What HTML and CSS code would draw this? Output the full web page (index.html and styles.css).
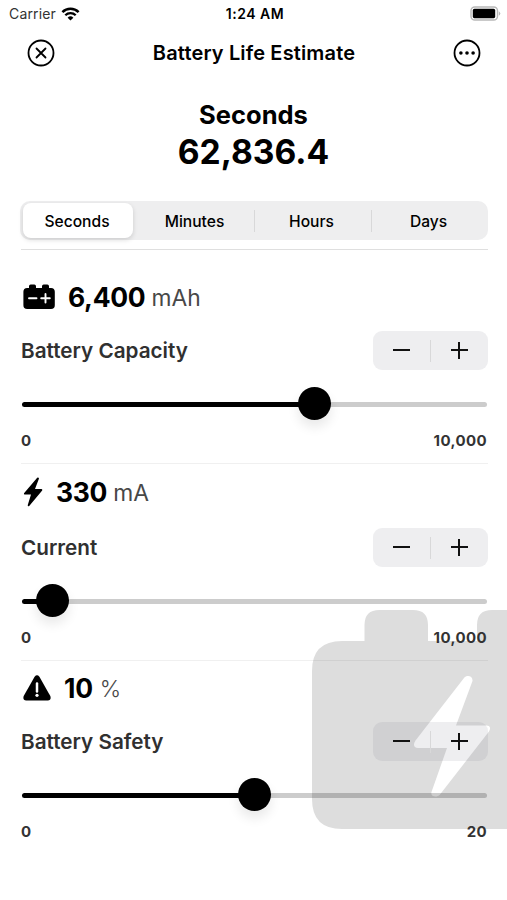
FILE: index.html
```html
<!DOCTYPE html>
<html lang="en">
<head>
  <meta charset="UTF-8">
  <meta name="viewport" content="width=device-width, initial-scale=1.0">
  <title>Battery Life Estimate</title>
  <link rel="stylesheet" href="styles.css">
</head>
<body>
  <div class="status-bar">
    <div class="carrier">
      <span>Carrier</span>
      <svg class="wifi" viewBox="0 0 18 14" width="19" height="14">
        <path d="M.9 5.100a11.500 11.500 0 0 1 16.200 0" fill="none" stroke="#000" stroke-width="2.500"/>
        <path d="M3.800 8.300a7.400 7.400 0 0 1 10.400 0" fill="none" stroke="#000" stroke-width="2.300"/>
        <path d="M9 13.600 6.100 10.700a4.100 4.100 0 0 1 5.800 0z"/>
      </svg>
    </div>
    <span class="time">1:24 AM</span>
    <svg class="battery" viewBox="0 0 31 15" width="31" height="15">
      <rect x="1" y="1" width="26.5" height="13" rx="3.8" fill="#fff" stroke="#b8b8b8" stroke-width="1.4"/>
      <rect x="2.8" y="2.8" width="22.4" height="9.4" rx="1.6"/>
      <path d="M28.8 5.200q3 2.300 0 4.600z" fill="#b8b8b8"/>
    </svg>
  </div>

  <div class="nav-bar">
    <button class="icon-button" aria-label="Close">
      <svg viewBox="0 0 28 28" width="28" height="28" fill="none" stroke="#000" stroke-width="1.8" stroke-linecap="round">
        <circle cx="14" cy="14" r="12.5"/>
        <path d="M9.500 9.500l9 9M18.500 9.500l-9 9"/>
      </svg>
    </button>
    <h1>Battery Life Estimate</h1>
    <button class="icon-button" aria-label="More">
      <svg viewBox="0 0 28 28" width="28" height="28">
        <circle cx="14" cy="14" r="12.5" fill="none" stroke="#000" stroke-width="1.8"/>
        <circle cx="7.9" cy="14" r="1.8"/>
        <circle cx="14" cy="14" r="1.8"/>
        <circle cx="20.1" cy="14" r="1.8"/>
      </svg>
    </button>
  </div>

  <div class="estimate">
    <div class="estimate-unit" id="unit">Seconds</div>
    <div class="estimate-value" id="value">62,836.4</div>
  </div>

  <div class="segments">
    <button class="segment active">Seconds</button>
    <button class="segment">Minutes</button>
    <button class="segment">Hours</button>
    <button class="segment">Days</button>
  </div>

  <div class="setting capacity">
    <div class="reading">
      <svg viewBox="0 0 32 26" width="32" height="26">
        <path d="M6 4V2.200Q6 .5 7.700 .5h3.600Q13 .5 13 2.200V4h6V2.200Q19 .5 20.700 .5h3.600Q26 .5 26 2.200V4h2q3.800 0 3.800 3.800v13.400q0 3.800-3.800 3.800H4.200Q.4 25 .4 21.200V7.800Q.4 4 4.200 4z"/>
        <path d="M6 14.200h7.500M18.200 14.200h8.600M22.500 9.900v8.600" stroke="#fff" stroke-width="1.900" stroke-linecap="round"/>
      </svg>
      <span class="number">6,400</span>
      <span class="unit">mAh</span>
    </div>
    <div class="control">
      <h2>Battery Capacity</h2>
      <div class="stepper"><button class="minus" aria-label="Decrease"></button><button class="plus" aria-label="Increase"></button></div>
    </div>
    <input class="slider" type="range" min="0" max="10000" value="6400" style="--fill: 64%">
    <div class="limits"><span>0</span><span>10,000</span></div>
  </div>

  <div class="setting current">
    <div class="reading">
      <svg viewBox="0 0 20 30" width="20" height="30">
        <path d="M14.200 .8 1 16.300Q.5 17.500 1.800 17.500H8L4.700 28.200Q4.900 29.800 6.200 29L19.200 13.400Q19.700 12.100 18.500 12H12L16 1.600Q15.600 .1 14.200 .8z"/>
      </svg>
      <span class="number">330</span>
      <span class="unit">mA</span>
    </div>
    <div class="control">
      <h2>Current</h2>
      <div class="stepper"><button class="minus" aria-label="Decrease"></button><button class="plus" aria-label="Increase"></button></div>
    </div>
    <input class="slider" type="range" min="0" max="10000" value="330" style="--fill: 3.3%">
    <div class="limits"><span>0</span><span>10,000</span></div>
  </div>

  <div class="setting safety">
    <div class="reading">
      <svg viewBox="0 0 28 26" width="28" height="26">
        <path d="M11.600 1.700Q14 -1 16.400 1.700L27.300 21Q28.600 25.200 24.800 25.500H3.200Q-.6 25.200 .7 21z"/>
        <path d="M14 8.500v8" stroke="#fff" stroke-width="2.500" stroke-linecap="round"/>
        <circle cx="14" cy="20.300" r="1.600" fill="#fff"/>
      </svg>
      <span class="number">10</span>
      <span class="unit percent">%</span>
    </div>
    <div class="control">
      <h2>Battery Safety</h2>
      <div class="stepper"><button class="minus" aria-label="Decrease"></button><button class="plus" aria-label="Increase"></button></div>
    </div>
    <input class="slider" type="range" min="0" max="20" value="10" style="--fill: 50%">
    <div class="limits"><span>0</span><span>20</span></div>
  </div>

  <!-- Large battery behind the controls -->
  <svg class="backdrop" viewBox="0 0 195 220" width="195" height="220">
    <path d="M0 61Q0 31 30 31H52.500V15Q52.500 0 67.500 0H101Q116 0 116 15V31H165V15Q165 0 180 0H195V219H30Q0 219 0 189z" fill="#dddddd"/>
    <path d="M152 68 103.500 130.500Q99.500 137 106 138H135L119.500 182C118 187 125 188 128 184.500L177 121.500Q180 116 174.500 115.500H144L160.500 71C161 66 155 64.500 152 68z" fill="#fff"/>
  </svg>
</body>
</html>
```
FILE: styles.css
```css
/* Base Styles */
* {
  box-sizing: border-box;
}

body {
  margin: 0;
  height: 900px;
  position: relative;
  overflow: hidden;
  background-color: #fff;
  color: #000;
  font-family: 'Inter', sans-serif;
}

button {
  padding: 0;
  border: none;
  background: none;
  color: #000;
  font-family: 'Inter', sans-serif;
  cursor: pointer;
}

svg {
  display: block;
}

/* Status Bar */
.status-bar {
  display: grid;
  grid-template-columns: 1fr auto 1fr;
  align-items: center;
  height: 27px;
  padding: 0 6px 0 9px;
  font-size: 14px;
}

.carrier {
  display: flex;
  align-items: center;
  gap: 5px;
  color: #333;
  letter-spacing: 0.15px;
}

.time {
  font-weight: 600;
  letter-spacing: 0.5px;
}

.battery {
  justify-self: end;
}

/* Navigation */
.nav-bar {
  display: flex;
  justify-content: space-between;
  align-items: center;
  height: 51px;
  padding: 0 26px 0 27px;
}

.nav-bar h1 {
  margin: 0;
  font-size: 20px;
  font-weight: 600;
  letter-spacing: 0.15px;
}

/* Estimate */
.estimate {
  padding-top: 19px;
  height: 123px;
  text-align: center;
  font-weight: 700;
}

.estimate-unit {
  font-size: 25.5px;
  line-height: 36px;
}

.estimate-value {
  font-size: 33.6px;
  line-height: 38px;
}

/* Segmented Control */
.segments {
  display: grid;
  grid-template-columns: repeat(4, 1fr);
  height: 39px;
  margin: 0 19px 9px 20px;
  padding: 2px 0;
  border-radius: 10px;
  background-color: #eeeeef;
}

.segment {
  padding: 1px 2px 0 0;
  font-size: 15.6px;
  font-weight: 500;
}

.segment.active {
  margin: 0 4px 0 3px;
  border-radius: 8px;
  background-color: #fff;
  box-shadow: 0 2px 5px rgba(0, 0, 0, 0.14);
}

.segment:nth-child(n + 3) {
  background: linear-gradient(#d8d8d9, #d8d8d9) left center / 1px 22px no-repeat;
}

/* Settings */
.setting {
  position: relative;
  z-index: 1;
  margin: 0 19px 0 21px;
  padding-top: 9px;
  border-top: 1px solid #f0f0f0;
}

.capacity {
  padding-top: 30px;
  border-color: #dfdfdf;
}

.safety {
  padding-top: 10px;
  border-color: rgba(0, 0, 0, 0.06);
}

.reading {
  display: flex;
  align-items: center;
  height: 34px;
  padding-left: 2px;
}

.current .reading {
  height: 38px;
}

.number {
  margin-left: 13px;
  font-size: 26.5px;
  font-weight: 700;
  letter-spacing: -0.3px;
}

.unit {
  margin-left: 6px;
  padding-top: 1px;
  color: #484848;
  font-size: 22.8px;
  font-weight: 400;
}

.percent {
  margin-left: 7px;
  font-weight: 300;
}

.control {
  display: flex;
  justify-content: space-between;
  align-items: center;
  margin-top: 17px;
}

.control h2 {
  margin: 0;
  color: #303030;
  font-size: 20.7px;
  font-weight: 600;
}

/* Stepper */
.stepper {
  display: flex;
  width: 115px;
  height: 39px;
  border-radius: 9px;
  background: linear-gradient(#d8d8d9, #d8d8d9) center / 1px 22px no-repeat, rgba(118, 118, 128, 0.12);
}

.stepper button {
  flex: 1;
  height: 38px;
}

.minus {
  background: linear-gradient(#111, #111) center / 17px 2px no-repeat;
}

.plus {
  background: linear-gradient(#111, #111) center / 17px 2px no-repeat,
    linear-gradient(#111, #111) center / 2px 17px no-repeat;
}

/* Slider */
.slider {
  -webkit-appearance: none;
  appearance: none;
  display: block;
  width: 465px;
  height: 33px;
  margin: 18px 0 0 1px;
  background: none;
}

.slider::-webkit-slider-runnable-track {
  height: 5px;
  border-radius: 3px;
  background: linear-gradient(to right, #000 var(--fill), rgba(0, 0, 0, 0.2) var(--fill));
}

.slider::-webkit-slider-thumb {
  -webkit-appearance: none;
  width: 33px;
  height: 33px;
  margin-top: -15px;
  border-radius: 50%;
  background-color: #000;
  box-shadow: 0 7px 12px rgba(0, 0, 0, 0.09);
}

.limits {
  display: flex;
  justify-content: space-between;
  margin: 10px 1px 12px 0;
  color: #333;
  font-size: 15px;
  font-weight: 700;
  letter-spacing: 0.4px;
  line-height: 20px;
}

/* Backdrop */
.backdrop {
  position: absolute;
  top: 610px;
  right: 0;
}
```
